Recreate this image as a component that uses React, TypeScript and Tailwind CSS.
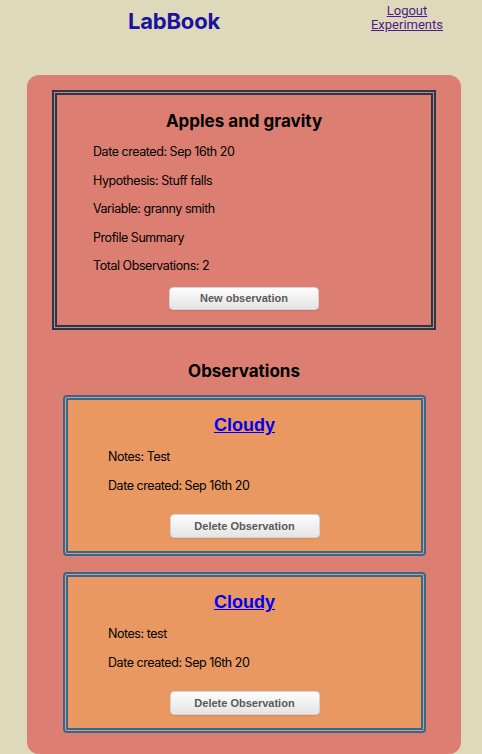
import React from "react";

function Btn({ label, h }: { label: string; h: string }) {
  return (
    <button
      className={`w-[150px] ${h} rounded-[4px] border border-[#d4d4d4] bg-gradient-to-b from-[#fdfdfd] to-[#e4e4e4] text-[11px] font-bold text-[#5a5a5a] shadow-[0_1px_1px_rgba(0,0,0,0.08)]`}
      style={{ fontFamily: '"Liberation Sans", Arial, sans-serif' }}
    >
      {label}
    </button>
  );
}

function Obs({ notes }: { notes: string }) {
  return (
    <div className="ml-[36px] mr-[35px] border-[5px] border-double border-[#2f6a97] rounded-[4px] bg-[#e99861] pt-[13px] pb-[13px]">
      <div className="text-center">
        <a
          href="#"
          className="text-[18px] font-bold text-[#0000ee] underline leading-[24px]"
          style={{ fontFamily: '"Liberation Sans", Arial, sans-serif' }}
        >
          Cloudy
        </a>
      </div>
      <div className="pl-[40px] text-[12.5px] tracking-[-0.45px] text-black">
        <div className="mt-[11px] leading-[17px]">Notes: {notes}</div>
        <div className="mt-[12px] leading-[17px]">Date created: Sep 16th 20</div>
      </div>
      <div className="flex justify-center mt-[20px]">
        <Btn label="Delete Observation" h="h-[24px]" />
      </div>
    </div>
  );
}

export default function App() {
  return (
    <div
      className="min-h-[754px] bg-[#dfd9bb] pb-[20px]"
      style={{ fontFamily: 'Inter, "Noto Sans", sans-serif' }}
    >
      <header className="flex items-start h-[75px]">
        <div className="w-[348px] flex justify-center pt-[7px]">
          <h1 className="text-[22px] font-bold text-[#1a12a0] leading-[28px] tracking-[-0.2px]">LabBook</h1>
        </div>
        <div
          className="w-[118px] flex flex-col items-center pt-[4px] text-[13px] leading-[14px]"
          style={{ fontFamily: "Roboto, sans-serif" }}
        >
          <a href="#" className="text-[#4e1c8a] underline">Logout</a>
          <a href="#" className="text-[#4e1c8a] underline">Experiments</a>
        </div>
      </header>
      <main className="ml-[27px] mr-[21px] rounded-[12px] bg-[#dc7f72] pt-[15px] pb-[21px]">
        <section className="mx-[25px] border-[5px] border-double border-[#233a4c] pt-[14px] pb-[15px]">
          <h2 className="text-center text-[17px] font-bold text-black leading-[24px]">Apples and gravity</h2>
          <div className="pl-[36px] text-[12.5px] tracking-[-0.45px] text-black">
            <div className="mt-[10px] leading-[17px]">Date created: Sep 16th 20</div>
            <div className="mt-[11.5px] leading-[17px]">Hypothesis: Stuff falls</div>
            <div className="mt-[11.5px] leading-[17px]">Variable: granny smith</div>
            <div className="mt-[11.5px] leading-[17px]">Profile Summary</div>
            <div className="mt-[11.5px] leading-[17px]">Total Observations: 2</div>
          </div>
          <div className="flex justify-center mt-[13px]">
            <Btn label="New observation" h="h-[23px]" />
          </div>
        </section>
        <h2 className="text-center text-[17px] font-bold text-black leading-[24px] mt-[29px] mb-[12px]">Observations</h2>
        <div className="flex flex-col gap-[16px]">
          <Obs notes="Test" />
          <Obs notes="test" />
        </div>
      </main>
    </div>
  );
}
